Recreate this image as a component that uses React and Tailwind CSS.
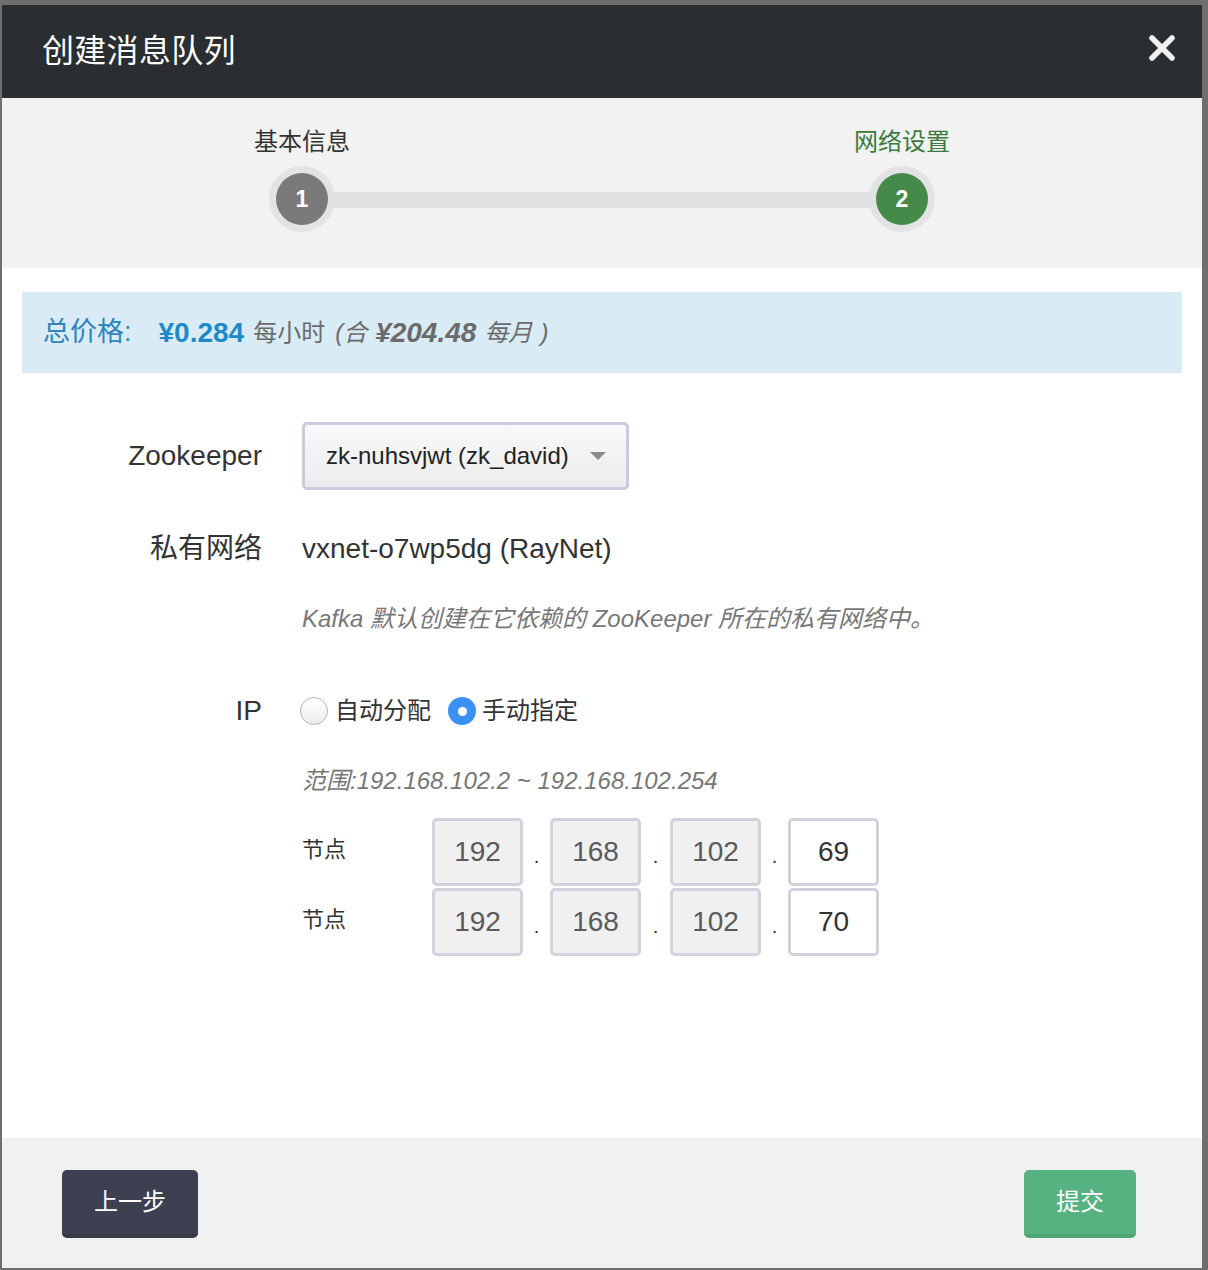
import React from "react";

const font = { fontFamily: '"Liberation Sans", "Noto Sans CJK SC", sans-serif' };

function IpBox({ value, editable }) {
  return (
    <div
      className={`w-[91px] h-[68px] rounded-[5px] border-[3px] border-[#d2d2de] flex items-center justify-center text-[28px] ${
        editable ? "bg-white text-[#333]" : "bg-[#f0f0f0] text-[#5a5a5a]"
      }`}
    >
      {value}
    </div>
  );
}

function Dot({ wide }) {
  return (
    <div
      className={`${wide ? "w-[29px]" : "w-[27px]"} h-[68px] flex items-center justify-center pt-[8px] text-[20px] text-[#333]`}
    >
      .
    </div>
  );
}

function IpRow({ last }) {
  return (
    <div className="flex h-[68px]">
      <div className="w-[130px] pt-[15px] text-[22px] text-[#333]">节点</div>
      <IpBox value="192" />
      <Dot />
      <IpBox value="168" />
      <Dot wide />
      <IpBox value="102" />
      <Dot />
      <IpBox value={last} editable />
    </div>
  );
}

export default function App() {
  return (
    <div className="w-[1208px] h-[1270px] bg-[#6e6e6e] pt-[5px] pl-[2px]" style={font}>
      <div className="w-[1200px] h-[1263px] bg-white flex flex-col">
        {/* header */}
        <div className="h-[93px] bg-[#2a2e30] flex items-center justify-between pl-[40px] pr-[26px] shrink-0">
          <div className="text-[32px] text-white tracking-[0.3px] pb-[2px]">创建消息队列</div>
          <svg width="28" height="28" viewBox="0 0 28 28" className="mb-[8px]">
            <path d="M4 4 L24 24 M24 4 L4 24" stroke="#f0f0f0" strokeWidth="5.5" strokeLinecap="round" />
          </svg>
        </div>

        {/* steps */}
        <div className="h-[170px] bg-[#f2f2f2] shrink-0 flex justify-center">
          <div className="relative w-[666px]">
            <div className="absolute left-[33px] right-[33px] top-[94px] h-[16px] bg-[#e0e0e0]" />
            <div className="absolute left-0 top-[29px] w-[66px] flex flex-col items-center">
              <div className="whitespace-nowrap text-[24px] text-[#333] leading-[30px]">基本信息</div>
              <div className="mt-[9px] w-[66px] h-[66px] rounded-full bg-[#e3e3e3] flex items-center justify-center">
                <div className="w-[52px] h-[52px] rounded-full bg-[#7a7a7a] flex items-center justify-center text-white text-[23px] font-bold">
                  1
                </div>
              </div>
            </div>
            <div className="absolute right-0 top-[29px] w-[66px] flex flex-col items-center">
              <div className="whitespace-nowrap text-[24px] text-[#3b7a3e] leading-[30px]">网络设置</div>
              <div className="mt-[9px] w-[66px] h-[66px] rounded-full bg-[#e3e3e3] flex items-center justify-center">
                <div className="w-[52px] h-[52px] rounded-full bg-[#458a48] flex items-center justify-center text-white text-[23px] font-bold">
                  2
                </div>
              </div>
            </div>
          </div>
        </div>

        {/* body */}
        <div className="h-[870px] shrink-0 px-[20px] pt-[24px]">
          <div className="h-[81px] bg-[#d9ebf5] flex items-center pl-[21px] whitespace-nowrap">
            <span className="text-[27px] text-[#2e86bd]">总价格:</span>
            <span className="ml-[27px] text-[28px] font-bold text-[#1f88c8]">¥0.284</span>
            <span className="ml-[9px] text-[24px] text-[#6a6a6a]">每小时</span>
            <span className="ml-[10px] text-[24px] text-[#6a6a6a] italic">(合</span>
            <span className="ml-[8px] text-[28px] font-bold italic text-[#6a6a6a]">¥204.48</span>
            <span className="ml-[8px] text-[24px] italic text-[#6a6a6a]">每月</span>
            <span className="ml-[8px] text-[24px] italic text-[#6a6a6a]">)</span>
          </div>

          {/* zookeeper */}
          <div className="mt-[49px] h-[68px] flex items-center">
            <div className="w-[240px] text-right text-[28px] text-[#333]">Zookeeper</div>
            <div className="ml-[40px] w-[327px] h-[68px] rounded-[5px] border-[3px] border-[#cbcbdd] bg-gradient-to-b from-[#f9f9f9] to-[#ececec] flex items-center pl-[21px] pr-[20px] justify-between">
              <span className="text-[24px] text-[#222]">zk-nuhsvjwt (zk_david)</span>
              <svg width="16" height="9" viewBox="0 0 16 9">
                <path d="M0 0 L16 0 L8 8 Z" fill="#8a8a8a" />
              </svg>
            </div>
          </div>

          {/* vxnet */}
          <div className="mt-[39px] h-[40px] flex items-center">
            <div className="w-[240px] text-right text-[28px] text-[#333]">私有网络</div>
            <div className="ml-[40px] text-[28px] text-[#333]">vxnet-o7wp5dg (RayNet)</div>
          </div>

          <div className="mt-[35px] h-[30px] flex items-center pl-[280px] text-[24px] italic text-[#777]">
            Kafka 默认创建在它依赖的 ZooKeeper 所在的私有网络中。
          </div>

          {/* IP */}
          <div className="mt-[57px] h-[40px] flex items-center">
            <div className="w-[240px] text-right text-[28px] text-[#333]">IP</div>
            <div className="ml-[38px] flex items-center">
              <div className="w-[28px] h-[28px] rounded-full border border-[#b5b5b5] bg-gradient-to-b from-white to-[#ececec]" />
              <span className="ml-[7px] text-[24px] text-[#333]">自动分配</span>
              <div className="ml-[17px] w-[28px] h-[28px] rounded-full bg-[#3b92f3] flex items-center justify-center">
                <div className="w-[9px] h-[9px] rounded-full bg-white" />
              </div>
              <span className="ml-[6px] text-[24px] text-[#333]">手动指定</span>
            </div>
          </div>

          <div className="mt-[35px] h-[30px] flex items-center pl-[280px] text-[24px] italic text-[#777]">
            范围:192.168.102.2 ~ 192.168.102.254
          </div>

          <div className="mt-[22px] pl-[280px] flex flex-col gap-[2px]">
            <IpRow last="69" />
            <IpRow last="70" />
          </div>
        </div>

        {/* footer */}
        <div className="h-[130px] shrink-0 bg-[#f1f1f1] border-t border-[#ebebeb] flex items-start justify-between pt-[31px] pl-[60px] pr-[66px]">
          <button className="w-[136px] h-[68px] rounded-[5px] bg-[#3c4050] border-b-[4px] border-[#363a48] text-white text-[24px] flex items-center justify-center">
            上一步
          </button>
          <button className="w-[112px] h-[68px] rounded-[5px] bg-[#56b280] border-b-[4px] border-[#4ea674] text-white text-[24px] flex items-center justify-center">
            提交
          </button>
        </div>
      </div>
    </div>
  );
}
